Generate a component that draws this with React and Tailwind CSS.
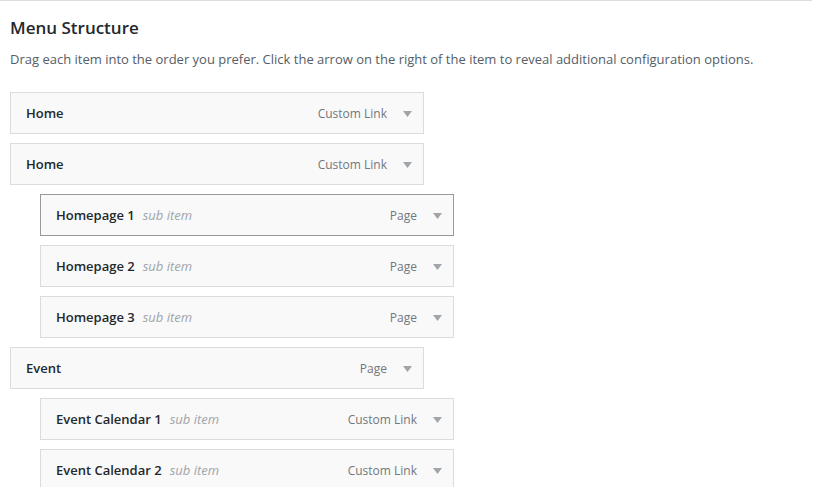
import React from "react";

const items = [
  { title: "Home", type: "Custom Link" },
  { title: "Home", type: "Custom Link" },
  { title: "Homepage 1", type: "Page", sub: true, active: true },
  { title: "Homepage 2", type: "Page", sub: true },
  { title: "Homepage 3", type: "Page", sub: true },
  { title: "Event", type: "Page" },
  { title: "Event Calendar 1", type: "Custom Link", sub: true },
  { title: "Event Calendar 2", type: "Custom Link", sub: true },
];

function Arrow() {
  return (
    <svg width="9" height="6" viewBox="0 0 9 6" className="ml-[16px]">
      <path d="M0 0 H9 L4.5 6 Z" fill="#a0a5aa" />
    </svg>
  );
}

function MenuItem({ item }) {
  return (
    <div
      className={`flex h-[42px] w-[414px] items-center border bg-[#f9f9f9] pt-[2px] pl-[15px] pr-[11px] ${
        item.sub ? "ml-[30px]" : ""
      } ${item.active ? "border-[#999]" : "border-[#dcdcde]"}`}
    >
      <span className="text-[13px] font-semibold text-[#23282d]">{item.title}</span>
      {item.sub && <span className="ml-[8px] text-[13px] italic text-[#a0a5aa]">sub item</span>}
      <span className="ml-auto text-[12px] text-[#72777c]">{item.type}</span>
      <Arrow />
    </div>
  );
}

export default function App() {
  return (
    <div className="min-h-[487px] bg-white font-['Open_Sans',sans-serif]">
      <div className="h-px w-[812px] bg-[#dddddd]" />
      <div className="px-[10px]">
        <h3 className="mt-[15px] text-[17px] leading-[24px] font-semibold text-[#23282d]">Menu Structure</h3>
        <p className="mt-[9px] text-[13px] leading-[20px] text-[#555d66]">
          Drag each item into the order you prefer. Click the arrow on the right of the item to reveal additional configuration options.
        </p>
        <div className="mt-[23px] flex flex-col gap-[9px]">
          {items.map((item, i) => (
            <MenuItem key={i} item={item} />
          ))}
        </div>
      </div>
    </div>
  );
}
